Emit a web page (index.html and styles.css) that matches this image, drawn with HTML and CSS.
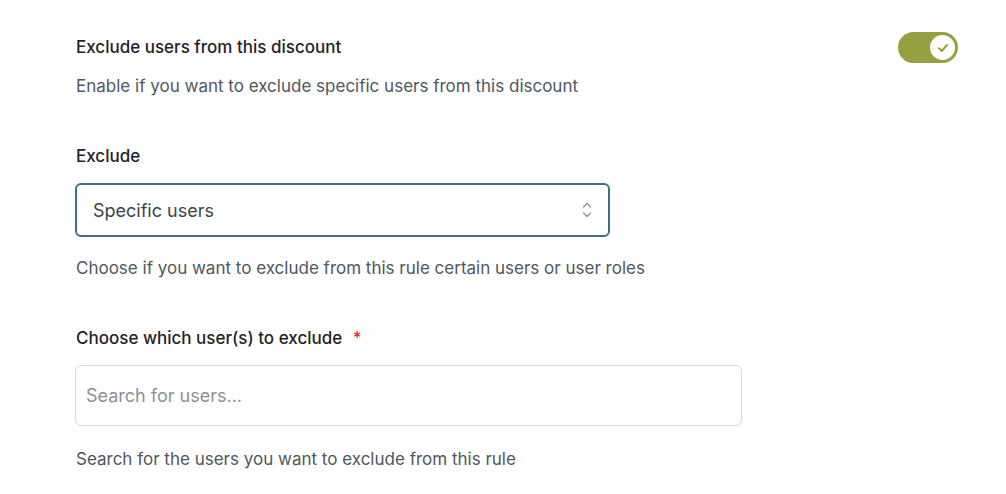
FILE: index.html
```html
<!DOCTYPE html>
<html lang="en">
<head>
<meta charset="utf-8">
<link rel="stylesheet" href="styles.css">
</head>
<body>
<div class="panel">
  <div class="row-head">
    <div class="head-text">
      <div class="title">Exclude users from this discount</div>
      <div class="desc first">Enable if you want to exclude specific users from this discount</div>
    </div>
    <div class="toggle">
      <span class="knob">
        <svg width="12" height="10" viewBox="0 0 12 10"><path d="M2 5.2 L4.8 8 L10 2" fill="none" stroke="#96a042" stroke-width="2" stroke-linecap="round" stroke-linejoin="round"/></svg>
      </span>
    </div>
  </div>

  <div class="field">
    <div class="label">Exclude</div>
    <div class="select">
      <span>Specific users</span>
      <svg class="chev" width="10" height="18" viewBox="0 0 10 18"><path d="M1.5 6 L5 2.5 L8.5 6 M1.5 12 L5 15.5 L8.5 12" fill="none" stroke="#8a8f96" stroke-width="1.3" stroke-linecap="round" stroke-linejoin="round"/></svg>
    </div>
    <div class="desc">Choose if you want to exclude from this rule certain users or user roles</div>
  </div>

  <div class="field">
    <div class="label">Choose which user(s) to exclude <span class="req">*</span></div>
    <div class="search">Search for users...</div>
    <div class="desc">Search for the users you want to exclude from this rule</div>
  </div>
</div>
</body>
</html>
```

FILE: styles.css
```css
html, body {
  margin: 0;
  padding: 0;
  background: #ffffff;
}
body {
  font-family: Inter, "Noto Sans", sans-serif;
  color: #1e2327;
}
.panel {
  width: 882px;
  padding: 35px 0 0 76px;
}
.row-head {
  display: flex;
  justify-content: space-between;
  align-items: flex-start;
}
.title, .label {
  font-size: 17px;
  font-weight: 500;
  line-height: 24px;
  color: #1f2328;
}
.desc {
  font-size: 17px;
  line-height: 24px;
  color: #50575e;
  margin-top: 19px;
}
.desc.first {
  margin-top: 15px;
}
.toggle {
  width: 60px;
  height: 31px;
  border-radius: 16px;
  background: #96a042;
  margin-top: -3px;
  display: flex;
  justify-content: flex-end;
  align-items: center;
  padding-right: 3px;
  box-sizing: border-box;
}
.knob {
  width: 25px;
  height: 25px;
  border-radius: 50%;
  background: #fff;
  display: flex;
  align-items: center;
  justify-content: center;
}
.field {
  margin-top: 46px;
}
.label {
  margin-bottom: 15px;
}
.req {
  color: #d63638;
  margin-left: 6px;
}
.select {
  width: 535px;
  height: 54px;
  box-sizing: border-box;
  border: 2px solid #3f6e86;
  border-radius: 6px;
  display: flex;
  align-items: center;
  justify-content: space-between;
  padding: 0 16px 0 16px;
  margin-left: -1px;
  font-size: 18px;
  color: #3c434a;
}
.search {
  width: 667px;
  height: 61px;
  box-sizing: border-box;
  border: 1px solid #d5d8dc;
  border-radius: 6px;
  display: flex;
  align-items: center;
  padding: 0 10px;
  margin-left: -1px;
  font-size: 18px;
  color: #8c9096;
}
.field:last-child .desc {
  margin-top: 21px;
}
```
